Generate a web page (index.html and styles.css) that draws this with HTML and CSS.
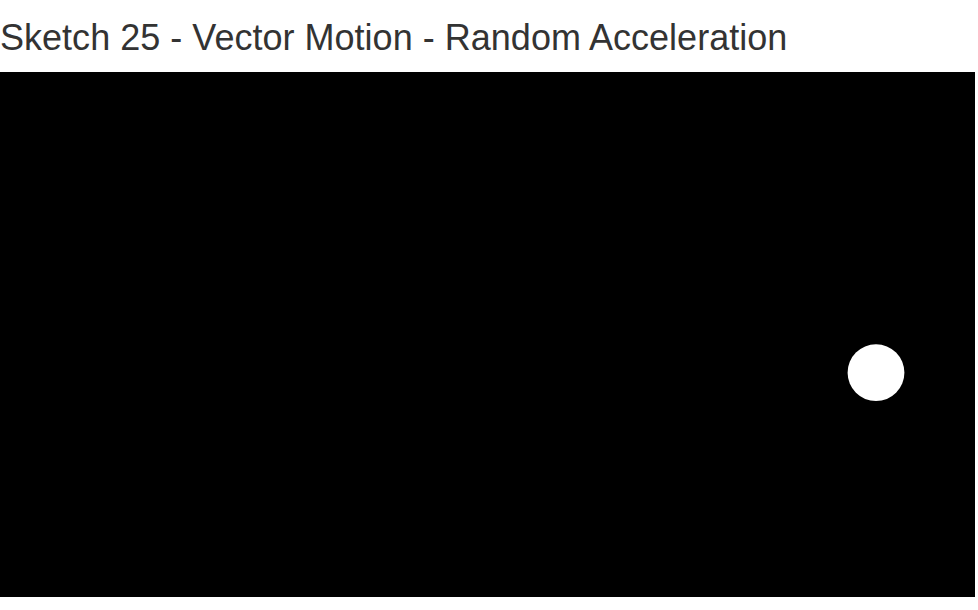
FILE: index.html
```html
<!DOCTYPE html>
<html>
<head>
<meta charset="utf-8">
<title>Sketch 25</title>
<link rel="stylesheet" href="styles.css">
</head>
<body>
<h1 class="title">Sketch 25 - Vector Motion - Random Acceleration</h1>
<div class="stage">
<svg class="canvas" width="975" height="525" viewBox="0 0 975 525" xmlns="http://www.w3.org/2000/svg">
<rect width="975" height="525" fill="#000"/>
<circle cx="876" cy="300.7" r="28.4" fill="#fff"/>
</svg>
</div>
</body>
</html>
```
FILE: styles.css
```css
html, body {
  margin: 0;
  padding: 0;
  background: #fff;
}
body {
  font-family: "Liberation Sans", Arial, sans-serif;
  color: #333;
}
.title {
  font-size: 36px;
  font-weight: 400;
  line-height: 1.1;
  letter-spacing: 0.02px;
  margin: 18px 0 14px;
}
.stage {
  line-height: 0;
}
.canvas {
  display: block;
}
```
